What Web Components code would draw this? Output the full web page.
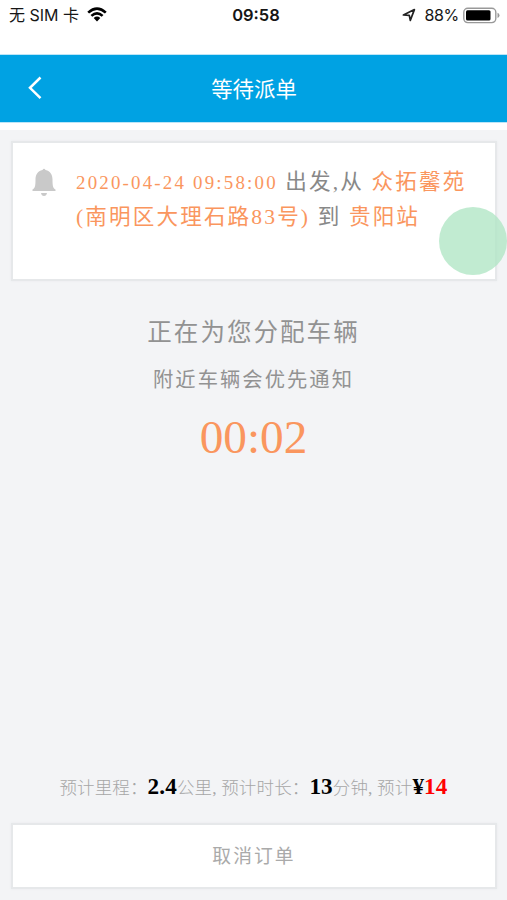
<!DOCTYPE html>
<html lang="zh-CN"><head><meta charset="utf-8"><title>等待派单</title>
<style>html,body{margin:0;height:100%;background:#f3f4f6}</style></head><body>
<waiting-page></waiting-page>
<script>
const define=(name,html)=>customElements.define(name,class extends HTMLElement{
  constructor(){super();this.attachShadow({mode:'open'}).innerHTML=html;}
});
define('status-bar',`<style>
:host{display:grid;grid-template-columns:1fr auto 1fr;height:54px;background:#fff;color:#161616;font:16px/30px Inter,"Noto Sans CJK SC",sans-serif;padding:0 7px 0 9px;box-sizing:border-box;align-items:start}
div{display:flex;align-items:center;height:30px;white-space:pre}
.r{justify-content:flex-end}.t{font-weight:600;font-size:16.5px;letter-spacing:0;padding-left:3px}
</style>
<div><span style="letter-spacing:0">无 SIM 卡</span><svg width="20" height="15" viewBox="0 0 20 15" style="margin-left:8px;margin-top:-1px"><g fill="none" stroke="#000" stroke-width="2.6"><path d="M1.2 5.6Q10-2.5 18.8 5.6M4.4 8.9Q10 3.7 15.6 8.9"/></g><path d="M6.7 11Q10 8.1 13.3 11L10 14.4z"/></svg></div>
<div class="t">09:58</div>
<div class="r"><svg width="14" height="14" viewBox="0 0 14 14"><path d="M1.4 7L12.4 1.6L8.3 12.4L7.3 7.3z" fill="none" stroke="#222" stroke-width="1.7" stroke-linejoin="round"/></svg><span style="margin:0 4px 0 8px;letter-spacing:-.3px">88%</span><svg width="37" height="17" viewBox="0 0 37 17"><rect x=".8" y="1.2" width="32" height="14.4" rx="4" fill="#fff" stroke="#999" stroke-width="1.4"/><rect x="3" y="3.3" width="24.5" height="10.3" rx="1.5"/><path d="M34.5 5.8Q36.5 6.5 36.5 8.4T34.5 11z" fill="#999"/></svg></div>`);
define('nav-bar',`<style>
:host{display:grid;grid-template-columns:70px 1fr 70px;align-items:center;height:69px;background:#00a2e3;border:solid #bce5f7;border-width:1px 0;box-sizing:border-box;color:#fff;font:21.4px/30px "Liberation Sans","Noto Sans CJK SC",sans-serif;text-align:center}
svg{margin:0 0 2px 27px;display:block}span{padding:2px 0 0 1px}
</style><svg width="16" height="24" viewBox="0 0 16 24"><path d="M13.5 1.5L3 11.8L13.5 22.2" fill="none" stroke="#fff" stroke-width="2.5"/></svg><span><slot></slot></span>`);
define('panel-box',`<style>:host{display:block;box-sizing:border-box;border:2px solid #e6e8ea;background:#fff;box-shadow:0 0 2px #e8eaec}</style><slot></slot>`);
define('trip-notice',`<style>
:host{display:grid;grid-template-columns:63px 1fr;padding-top:21.5px;height:114px;font:21.6px/35px "Liberation Serif","Noto Sans CJK SC",serif;letter-spacing:2.12px;color:#888;white-space:nowrap}
svg{margin:3px 0 0 19px}b{font-weight:400;color:#fa965e}.d{font-size:18.9px;letter-spacing:2.2px}
</style><svg width="24" height="29" viewBox="0 0 24 29" fill="#c9c9c9"><path d="M10.5 2Q12-.5 13.5 2C18.5 3.2 20.5 7 20.5 11.5C20.5 18 21 20 23.5 21.5V23H.5V21.5C3 20 3.5 18 3.5 11.5C3.5 7 5.5 3.2 10.5 2zM9 25H15Q14.5 28 12 28T9 25z"/></svg>
<div><b class="d">2020-04-24 09:58:00</b> 出发,从 <b>众拓馨苑</b><br><b>(南明区大理石路83号)</b> 到 <b>贵阳站</b></div>`);
define('dispatch-state',`<style>
:host{display:flex;flex-direction:column;align-items:center;color:#929292;font-family:"Liberation Serif","Noto Sans CJK SC",serif;letter-spacing:2.05px}
h1{font-size:24.5px;line-height:40px;font-weight:400;margin:0}p{font-size:20.3px;line-height:34px;margin:10px 0 0}time{font-size:47.3px;line-height:54px;color:#fa965e;letter-spacing:0;margin-top:13px}
</style><h1>正在为您分配车辆</h1><p>附近车辆会优先通知</p><time>00:02</time>`);
define('trip-estimate',`<style>
:host{display:block;text-align:center;font:300 17.5px/32px "Liberation Serif","Noto Sans CJK SC",serif;letter-spacing:.13px;color:#a6a6a6;white-space:nowrap}
b{font-size:23.2px;font-weight:700;color:#000}.p{color:#f00}
</style>预计里程：<b>2.4</b>公里, 预计时长：<b>13</b>分钟, 预计<b>¥</b><b class="p">14</b>`);
define('cancel-button',`<style>
:host{display:block}button{display:block;width:100%;height:62px;border:0;background:none;padding:2px 0 0;color:#aaa;font:18.8px/30px "Liberation Serif","Noto Sans CJK SC",serif;letter-spacing:2.05px}
</style><button><slot></slot></button>`);
define('touch-dot',`<style>:host{position:absolute;left:439px;top:207px;width:68px;height:68px;border-radius:50%;background:rgba(176,229,196,.78)}</style>`);
define('waiting-page',`<style>
:host{display:flex;flex-direction:column;position:relative;height:900px;width:507px;overflow:hidden;background:#f3f4f6}
.top{background:#fff;padding-bottom:7px}
panel-box{margin:0 10px 0 11px}.notice{margin-top:11px;height:140px}dispatch-state{margin-top:32px}trip-estimate{margin-top:auto}.cancel{margin-top:19.5px;margin-bottom:11px;height:66px}
</style><div class="top"><status-bar></status-bar><nav-bar>等待派单</nav-bar></div>
<panel-box class="notice"><trip-notice></trip-notice></panel-box>
<dispatch-state></dispatch-state><trip-estimate></trip-estimate>
<panel-box class="cancel"><cancel-button>取消订单</cancel-button></panel-box><touch-dot></touch-dot>`);
</script></body></html>
